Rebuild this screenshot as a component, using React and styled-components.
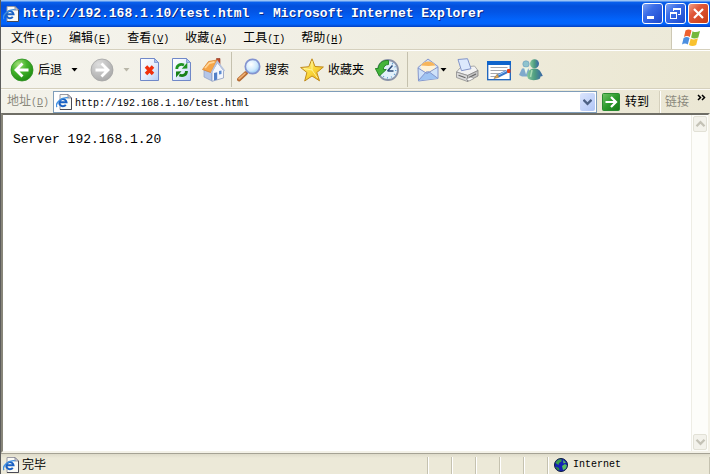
import React from 'react'
import styled, { createGlobalStyle, css } from 'styled-components'

const mono = "'Liberation Mono', 'Noto Sans CJK SC', monospace"
const sans = "'Liberation Sans', 'Noto Sans CJK SC', sans-serif"

const GlobalStyle = createGlobalStyle`
  * {
    box-sizing: border-box;
  }
  body {
    margin: 0;
    background: #ece9d8;
  }
  button, input {
    margin: 0;
    padding: 0;
    border: 0;
    background: none;
    font: inherit;
    color: inherit;
  }
  svg {
    display: block;
    flex: none;
  }
`

const Window = styled.div`
  display: flex;
  flex-direction: column;
  min-height: 100vh;
  border-left: 1px solid #5c5c5c;
  background: #ece9d8;
  color: #000;
  font-family: ${sans};
  font-size: 12px;
  line-height: 16px;
`

const TitleBar = styled.header`
  display: flex;
  align-items: center;
  height: 27px;
  padding: 0 1px 0 2px;
  gap: 4px;
  background: linear-gradient(
    #9cc4f4 0, #9cc4f4 1px, #0a62ee 2px, #0350dc 6px,
    #0355e6 12px, #0264fc 20px, #0264fc 24px, #0440c0 27px
  );
`

const Title = styled.h1`
  display: flex;
  flex: 1;
  gap: 8px;
  margin: 0;
  overflow: hidden;
  white-space: nowrap;
  color: #fff;
  font-family: ${mono};
  font-size: 13px;
  font-weight: bold;
  text-shadow: 1px 1px 0 #0a2a86;
`

const WindowButtons = styled.div`
  display: flex;
  gap: 2px;
`

const WindowButton = styled.button`
  display: flex;
  align-items: center;
  justify-content: center;
  width: 21px;
  height: 21px;
  border: 1px solid #fff;
  border-radius: 3px;
  background: ${props => props.$close
    ? 'linear-gradient(135deg, #f0a088 0, #e0583a 35%, #c83c14 100%)'
    : 'linear-gradient(135deg, #7ea2f0 0, #3c6ee8 35%, #1c48cc 100%)'};
`

const MenuBar = styled.nav`
  display: flex;
  align-items: center;
  height: 23px;
  border-bottom: 1px solid #d5d0bd;
  background: linear-gradient(90deg, #f5f4ee, #ece9d8);
`

const MenuList = styled.div`
  display: flex;
  flex: 1;
  gap: 16px;
  padding: 2px 0 0 10px;
`

const MenuItem = styled.button`
  display: flex;
  align-items: baseline;
  white-space: nowrap;
`

const Key = styled.span`
  font-family: ${mono};
  font-size: 10px;
`

const Brand = styled.div`
  display: flex;
  align-items: center;
  justify-content: center;
  align-self: stretch;
  width: 39px;
  border-left: 1px solid #cdc8b4;
  background: #fff;
`

const ToolBar = styled.div`
  display: flex;
  align-items: center;
  height: 39px;
  padding-left: 5px;
  border-top: 1px solid #fff;
  border-bottom: 1px solid #d5d0bd;
  background: linear-gradient(90deg, #f5f4ee, #ebe7d2);
`

const ToolGroup = styled.div`
  display: flex;
  align-items: center;
  gap: ${props => props.$gap || 0}px;
`

const ToolButton = styled.button`
  display: flex;
  align-items: center;
  gap: ${props => (props.$tight ? 0 : 4)}px;
  height: 32px;
  padding: 0 4px;
  white-space: nowrap;
`

const CaretButton = styled.button`
  display: flex;
  align-items: center;
  justify-content: center;
  width: 16px;
  height: 32px;
  margin-right: ${props => props.$space || 0}px;
  color: ${props => (props.disabled ? '#b9b6a8' : '#000')};
`

const Divider = styled.span`
  width: 1px;
  height: 35px;
  margin: 0 ${props => props.$space}px;
  background: #c5c1ae;
`

const AddressBar = styled.form`
  display: flex;
  align-items: center;
  height: 24px;
  border-top: 1px solid #fbfaf6;
  background: linear-gradient(90deg, #f3f2ea, #ebe7d4);
`

const AddressLabel = styled.label`
  display: flex;
  align-items: baseline;
  width: 52px;
  padding-left: 6px;
  color: #8a887c;
`

const AddressField = styled.div`
  display: flex;
  align-items: center;
  flex: 1;
  height: 22px;
  gap: 3px;
  padding: 0 1px 0 2px;
  border: 1px solid #7f9db9;
  background: #fff;
`

const AddressInput = styled.input`
  flex: 1;
  min-width: 0;
  height: 18px;
  padding-top: 3px;
  outline: 0;
  font-family: ${mono};
  font-size: 10px;
`

const DropButton = styled.button`
  display: flex;
  align-items: center;
  justify-content: center;
  width: 15px;
  height: 18px;
  border-radius: 2px;
  background: linear-gradient(135deg, #dbe5fd, #b0c5f6);
`

const GoButton = styled.button`
  display: flex;
  align-items: center;
  gap: 5px;
  padding: 0 11px 0 5px;
  white-space: nowrap;
`

const Links = styled.div`
  display: flex;
  align-items: center;
  gap: 8px;
  height: 22px;
  padding: 0 4px;
  border-left: 1px solid #fff;
  box-shadow: -1px 0 0 #d5d0bd;
  color: #8a887c;
`

const MoreButton = styled.button`
  align-self: flex-start;
  color: #000;
`

const Viewport = styled.div`
  display: flex;
  flex: 1;
  border: 2px solid #f4f2e8;
  border-top-color: #6f6e66;
  border-left: 2px solid #88867a;
  background: #fff;
`

const Page = styled.main`
  flex: 1;
  padding: 15px 10px;
  font-family: ${mono};
  font-size: 13px;
  line-height: 20px;
`

const ScrollBar = styled.div`
  display: flex;
  flex-direction: column;
  justify-content: space-between;
  width: 17px;
  padding: 1px;
  border-left: 1px solid #eeede5;
  background: #fdfdfa;
`

const ScrollButton = styled.button`
  display: flex;
  align-items: center;
  justify-content: center;
  height: 16px;
  border: 1px solid #e2e1d6;
  border-radius: 2px;
  background: #f3f2eb;
  color: #c4c2b6;
`

const statusCell = css`
  display: flex;
  align-items: center;
  height: 17px;
  border-right: 1px solid #c5c2b0;
  box-shadow: 1px 0 0 #fff;
`

const StatusBar = styled.footer`
  display: flex;
  align-items: center;
  height: 21px;
  padding-top: 2px;
  border-top: 1px solid #a5a294;
  background: linear-gradient(#dedbca, #ece9d8 4px);
`

const StatusText = styled.div`
  ${statusCell}
  flex: 1;
  gap: 3px;
  padding-left: 2px;
`

const StatusCell = styled.div`
  ${statusCell}
  width: 24px;
`

const Zone = styled.div`
  ${statusCell}
  width: 162px;
  padding-left: 6px;
  gap: 5px;
  font-family: ${mono};
  font-size: 10px;
`

const PageIcon = ({ size = 16 }) => (
  <svg width={size} height={size} viewBox="0 0 16 16">
    <path d="M4 .5h8l3.500 3.500v11.500H4z" fill="#fbfbf6" stroke="#9a9aa4" />
    <path d="M12 .5v3.500h3.500z" fill="#d8dbe6" stroke="#6b6b78" strokeWidth=".7" />
    <path d="M15.500 4v11.500H4" fill="none" stroke="#4a4a55" />
    <path d="M3.500 8.200H10.500A3.600 3.600 0 1 0 9.800 10.900" fill="none" stroke="#1b62c4" strokeWidth="2" />
    <path d="M1 13C-1.500 9.500 5.500 2.800 12 3.800" fill="none" stroke="#3f8fe0" strokeWidth="1.300" />
  </svg>
)

const WindowsFlag = () => (
  <svg width="20" height="18" viewBox="0 0 20 18">
    <path d="M4.500 1.500C6.500.2 8.700.2 10.500 1.500L8.800 8C7 6.800 5 6.800 3 8z" fill="#ee6130" />
    <path d="M11.500 2.200c2 1.200 4.500 1.200 7.500-.2L17.300 8.500c-2.700 1.400-5 1.400-7.200 0z" fill="#74b83c" />
    <path d="M2.600 9C4.600 7.800 6.700 7.800 8.500 9L6.800 15.500C5 14.200 3 14.200 1 15.500z" fill="#4c8fe0" />
    <path d="M9.700 9.500c2 1.200 4.300 1.200 7.200-.2L15.200 16c-2.700 1.400-5 1.400-7.200 0z" fill="#f9c22e" />
  </svg>
)

const Caret = () => (
  <svg width="7" height="4" viewBox="0 0 7 4">
    <path d="M.5 0h6L3.500 3.500z" fill="currentColor" />
  </svg>
)

const Chevron = ({ up, width = 9, color = 'currentColor' }) => (
  <svg width={width} height="8" viewBox="0 0 9 8">
    <path d={up ? 'M.5 6.200l4-4 4 4' : 'M.5 1.800l4 4 4-4'} fill="none" stroke={color} strokeWidth="2.300" />
  </svg>
)

const BackIcon = () => (
  <svg width="24" height="24" viewBox="0 0 24 24">
    <defs>
      <radialGradient id="back" cx=".35" cy=".25" r=".8">
        <stop offset="0" stopColor="#a6e07c" />
        <stop offset=".45" stopColor="#45b52c" />
        <stop offset="1" stopColor="#1d8a12" />
      </radialGradient>
    </defs>
    <circle cx="12" cy="12" r="11" fill="url(#back)" stroke="#2f8f22" strokeWidth=".8" />
    <path d="M12.500 5.500L6 12l6.500 6.500M6.500 12h12" fill="none" stroke="#fff" strokeWidth="2.800" />
  </svg>
)

const ForwardIcon = () => (
  <svg width="24" height="24" viewBox="0 0 24 24">
    <defs>
      <radialGradient id="forward" cx=".35" cy=".25" r=".8">
        <stop offset="0" stopColor="#dedede" />
        <stop offset=".6" stopColor="#bdbdbd" />
        <stop offset="1" stopColor="#a8a8a8" />
      </radialGradient>
    </defs>
    <circle cx="12" cy="12" r="11" fill="url(#forward)" stroke="#a5a5a5" strokeWidth=".8" />
    <path d="M11.500 5.500L18 12l-6.500 6.500M17.500 12h-12" fill="none" stroke="#fff" strokeWidth="2.800" />
  </svg>
)

const Sheet = ({ children }) => (
  <svg width="24" height="24" viewBox="0 0 24 24">
    <defs>
      <linearGradient id="sheet" x1="0" y1="0" x2="1" y2="1">
        <stop offset="0" stopColor="#fff" />
        <stop offset=".5" stopColor="#e8f0fd" />
        <stop offset="1" stopColor="#b4cdf5" />
      </linearGradient>
    </defs>
    <path d="M2.500 .5h14l4 4v18H2.500z" fill="url(#sheet)" stroke="#7088c8" />
    <path d="M16.500 .5v4h4z" fill="#a9bfec" stroke="#7088c8" strokeWidth=".7" />
    {children}
  </svg>
)

const StopIcon = () => (
  <Sheet>
    <path d="M8 8.500l7 7.500M15 8.500l-7 7.500" stroke="#f0300c" strokeWidth="3.400" />
  </Sheet>
)

const RefreshIcon = () => (
  <Sheet>
    <path d="M6.800 11c0-4 3.500-5.500 7.200-4" fill="none" stroke="#1f9422" strokeWidth="2.800" />
    <path d="M11.800 10.800l5.500-.2V4.500z" fill="#1f9422" />
    <path d="M16.500 13c0 4-3.500 5.500-7.200 4" fill="none" stroke="#178018" strokeWidth="2.800" />
    <path d="M11.500 13.200l-5.500.2v6.100z" fill="#178018" />
  </Sheet>
)

const HomeIcon = () => (
  <svg width="24" height="24" viewBox="0 0 24 24">
    <path d="M14.500 .5h3.500v7l-3.500-3z" fill="#c04a28" stroke="#8c3420" strokeWidth=".6" />
    <path d="M2 12l8 3v8l-8-4z" fill="#b4c6e8" stroke="#8a9cc4" strokeWidth=".7" />
    <path d="M10 13.500l5.500-9 6 8v7.500L10 23.300z" fill="#f4f7fd" stroke="#8d9cc0" strokeWidth=".8" />
    <path d="M.5 11.500L6.500 3.500 15 2l-6 12.500z" fill="#f6a548" stroke="#d98432" strokeWidth=".8" />
    <path d="M3 10L7.500 5l5-1.200" fill="none" stroke="#ffd596" strokeWidth="1.800" />
    <path d="M9.300 15L15.300 3.500 22.500 13" fill="none" stroke="#b6c3de" strokeWidth="1.600" />
    <path d="M12 15l3.200-.7v7.300l-3.200.8z" fill="#5380c8" />
    <path d="M17 13l2.500-.5v3.500l-2.500.5z" fill="#5c8cd2" />
  </svg>
)

const SearchIcon = () => (
  <svg width="24" height="24" viewBox="0 0 24 24">
    <defs>
      <radialGradient id="lens" cx=".4" cy=".35" r=".7">
        <stop offset="0" stopColor="#fff" />
        <stop offset=".6" stopColor="#cfe9fc" />
        <stop offset="1" stopColor="#86bff0" />
      </radialGradient>
    </defs>
    <path d="M2 21.500L9 15" stroke="#b56c34" strokeWidth="4" strokeLinecap="round" />
    <path d="M2 20.800l6-5.500" stroke="#f2b070" strokeWidth="1.600" strokeLinecap="round" />
    <circle cx="15.500" cy="8.500" r="7.200" fill="url(#lens)" stroke="#8393cf" strokeWidth="1.700" />
  </svg>
)

const StarIcon = () => (
  <svg width="24" height="24" viewBox="0 0 24 24">
    <defs>
      <linearGradient id="star" x1="0" y1="0" x2="1" y2="1">
        <stop offset="0" stopColor="#fffab0" />
        <stop offset=".5" stopColor="#fbd93c" />
        <stop offset="1" stopColor="#e9a818" />
      </linearGradient>
    </defs>
    <path d="M12 .8l3 7.700 8.400.5-6.600 5.500 2.700 8.300-7.500-4.800-7.300 5 2.200-8.500L.6 9.500l8.200-.8z" fill="url(#star)" stroke="#c08a1c" strokeLinejoin="round" />
    <path d="M12 3v9l-8-1.500M12 12l5.500 8" fill="none" stroke="#fff6a0" strokeWidth=".9" />
  </svg>
)

const HistoryIcon = () => (
  <svg width="24" height="24" viewBox="0 0 24 24">
    <circle cx="13" cy="12" r="10" fill="#e2f0fa" stroke="#8a93a8" strokeWidth="1.800" />
    <circle cx="13" cy="12" r="7.800" fill="none" stroke="#5b9bd0" strokeWidth="1.300" strokeDasharray="1 3.080" />
    <path d="M12.500 13l5-5.500M12.500 13h6" stroke="#2c4a78" strokeWidth="1.500" />
    <path d="M13.500 2.500C6.500 2 3.500 6 3.200 10.500H.3l4 7.500 7-6.500H8.300c.2-3 2-5 5.200-5z" fill="#44b43a" stroke="#1f8020" strokeWidth=".9" />
  </svg>
)

const MailIcon = () => (
  <svg width="24" height="24" viewBox="0 0 24 24">
    <path d="M2 9.500L12 1l10 7.500v12L2.500 23z" fill="#cfe2fa" stroke="#8496cc" />
    <path d="M4.500 8.500c2-5.500 12-7 15 0l-.5 3-7 4-7-3.500z" fill="#fff3d8" />
    <path d="M5 7.500C8 2.500 16 2 19.500 7.500l-7 .5z" fill="#f6b55c" />
    <path d="M2.500 22.500l7.500-8.500 3-.2 9 6.700" fill="#9fc4f3" stroke="#8496cc" />
    <path d="M2 10l9 5.500L22 9" fill="none" stroke="#8496cc" />
  </svg>
)

const PrintIcon = () => (
  <svg width="24" height="24" viewBox="0 0 24 24">
    <path d="M1.500 14l4-4.500 14-1.500 3.500 4.500-10 5z" fill="#f2f2f2" stroke="#979797" strokeWidth=".8" />
    <path d="M3 1.500L12.500.7l3.500 10-9.500 2z" fill="#dce9fd" stroke="#8294c8" />
    <path d="M1.500 14l11 3.500v6l-11-4z" fill="#dadada" stroke="#8d8d8d" strokeWidth=".8" />
    <path d="M12.500 17.500l10.500-5v5.500l-10.500 5.500z" fill="#c4c4c4" stroke="#808080" strokeWidth=".8" />
    <path d="M3.500 17.200l7 2.500M14 19.500l7-3.500" stroke="#666" strokeWidth="1.200" />
    <path d="M11 21l5-2 3 1.500-5 2.500z" fill="#fafafa" stroke="#888" strokeWidth=".6" />
  </svg>
)

const EditIcon = () => (
  <svg width="24" height="24" viewBox="0 0 24 24">
    <rect x=".7" y="3.700" width="22.600" height="18" fill="#fff" stroke="#1b62bd" strokeWidth="1.300" />
    <rect x="0" y="3" width="24" height="4" fill="#0f64cc" />
    <path d="M3.500 9.500h17M3.500 12.500h15M3.500 15.500h11M3.500 18.500h5" stroke="#a4a8b0" />
    <path d="M11 18l9-4.500" stroke="#3a76c8" strokeWidth="3.600" />
    <path d="M11 17.200l8.500-4.300" stroke="#a9d0f8" />
    <path d="M7 20.500l3.200-4.200 1.500 3z" fill="#e8a94c" stroke="#8b6a38" strokeWidth=".6" />
    <rect x="20" y="11" width="3.500" height="4" rx="1" fill="#e2401c" />
  </svg>
)

const PeopleIcon = () => (
  <svg width="24" height="24" viewBox="0 0 24 24">
    <defs>
      <linearGradient id="person">
        <stop offset="0" stopColor="#85c79c" />
        <stop offset=".5" stopColor="#4d9c80" />
        <stop offset="1" stopColor="#3763a8" />
      </linearGradient>
    </defs>
    <path d="M0 17l3-6.500 6-.5 3 6-3.500 2.500H3z" fill="#7fa9cc" />
    <circle cx="7" cy="6" r="3.200" fill="#8fc3ce" stroke="#6698b8" strokeWidth=".6" />
    <path d="M5 9.500l2 7L9.500 9.500z" fill="#e9f7e4" />
    <path d="M9 20.500L8 17.500C9.500 12 11.500 10.500 16 10.500c4 0 6 3 7.800 7.500l-2.300.5-.5 2c-3 2-9 2.500-12 0z" fill="url(#person)" />
    <circle cx="15.500" cy="5.800" r="4.500" fill="url(#person)" />
    <path d="M13 12l-1.500 7" stroke="#a9dbb4" strokeWidth="1.500" />
  </svg>
)

const GoIcon = () => (
  <svg width="18" height="18" viewBox="0 0 18 18">
    <defs>
      <linearGradient id="go" x1="0" y1="0" x2="1" y2="1">
        <stop offset="0" stopColor="#6fc465" />
        <stop offset=".5" stopColor="#2c9a2c" />
        <stop offset="1" stopColor="#127a14" />
      </linearGradient>
    </defs>
    <rect x=".5" y=".5" width="17" height="17" rx="1" fill="url(#go)" stroke="#2a8a30" />
    <path d="M9 4l5 5-5 5M3.500 9H14" fill="none" stroke="#fff" strokeWidth="2.200" />
  </svg>
)

const GlobeIcon = () => (
  <svg width="14" height="14" viewBox="0 0 14 14">
    <circle cx="7" cy="7" r="6.500" fill="#1522b4" stroke="#0c1c3c" />
    <path d="M1.500 5C2.500 2 5 .8 7.500 1.200L7.500 3.500 5 5 4.500 7z" fill="#3aa04a" />
    <path d="M9 2l3 2.500-2.500 1zM8 8L11 6l2 1.500-1.500 3.500-2.500 1z" fill="#58c060" />
    <path d="M1.500 8.500l3.500 1.500.5 2.500L3 11.500z" fill="#2c8c3c" />
  </svg>
)

const menus = [
  ['文件', 'F'],
  ['编辑', 'E'],
  ['查看', 'V'],
  ['收藏', 'A'],
  ['工具', 'T'],
  ['帮助', 'H'],
]

const App = () => {
  return (
    <>
      <GlobalStyle />
      <Window>
        <TitleBar>
          <PageIcon />
          <Title>
            <span>http://192.168.1.10/test.html</span>
            <span>-</span>
            <span>Microsoft Internet Explorer</span>
          </Title>
          <WindowButtons>
            <WindowButton aria-label="最小化">
              <svg width="17" height="17" viewBox="0 0 17 17">
                <rect x="3" y="11" width="7" height="3" fill="#fff" />
              </svg>
            </WindowButton>
            <WindowButton aria-label="还原">
              <svg width="17" height="17" viewBox="0 0 17 17">
                <path d="M6.500 6V3.500h7v6H11" fill="none" stroke="#fff" />
                <path d="M6 4h8" stroke="#fff" strokeWidth="2" />
                <rect x="3.500" y="7.500" width="6" height="6" fill="none" stroke="#fff" />
                <path d="M3 8h7" stroke="#fff" strokeWidth="2" />
              </svg>
            </WindowButton>
            <WindowButton $close aria-label="关闭">
              <svg width="17" height="17" viewBox="0 0 17 17">
                <path d="M4 4l9 9M13 4l-9 9" stroke="#fff" strokeWidth="2.200" />
              </svg>
            </WindowButton>
          </WindowButtons>
        </TitleBar>

        <MenuBar>
          <MenuList>
            {menus.map(([label, key]) => (
              <MenuItem key={key}>
                {label}
                <Key>(<u>{key}</u>)</Key>
              </MenuItem>
            ))}
          </MenuList>
          <Brand>
            <WindowsFlag />
          </Brand>
        </MenuBar>

        <ToolBar>
          <ToolGroup>
            <ToolButton><BackIcon />后退</ToolButton>
            <CaretButton $space={4} aria-label="后退记录"><Caret /></CaretButton>
            <ToolButton disabled aria-label="前进"><ForwardIcon /></ToolButton>
            <CaretButton disabled aria-label="前进记录"><Caret /></CaretButton>
            <ToolButton aria-label="停止"><StopIcon /></ToolButton>
            <ToolButton aria-label="刷新"><RefreshIcon /></ToolButton>
            <ToolButton aria-label="主页"><HomeIcon /></ToolButton>
          </ToolGroup>
          <Divider $space={1} />
          <ToolGroup $gap={3}>
            <ToolButton><SearchIcon />搜索</ToolButton>
            <ToolButton><StarIcon />收藏夹</ToolButton>
            <ToolButton aria-label="历史"><HistoryIcon /></ToolButton>
          </ToolGroup>
          <Divider $space={4} />
          <ToolGroup>
            <ToolButton $tight aria-label="邮件"><MailIcon /><Caret /></ToolButton>
            <ToolButton aria-label="打印"><PrintIcon /></ToolButton>
            <ToolButton aria-label="编辑"><EditIcon /></ToolButton>
            <ToolButton aria-label="Messenger"><PeopleIcon /></ToolButton>
          </ToolGroup>
        </ToolBar>

        <AddressBar onSubmit={e => e.preventDefault()}>
          <AddressLabel htmlFor="address">
            地址<Key>(<u>D</u>)</Key>
          </AddressLabel>
          <AddressField>
            <PageIcon />
            <AddressInput id="address" defaultValue="http://192.168.1.10/test.html" />
            <DropButton type="button" aria-label="地址列表">
              <Chevron color="#4d6185" />
            </DropButton>
          </AddressField>
          <GoButton><GoIcon />转到</GoButton>
          <Links>
            链接
            <MoreButton type="button" aria-label="更多链接">
              <svg width="9" height="16" viewBox="0 0 9 16">
                <path d="M1 4l2.500 2.500L1 9M5 4l2.500 2.500L5 9" fill="none" stroke="currentColor" strokeWidth="1.500" />
              </svg>
            </MoreButton>
          </Links>
        </AddressBar>

        <Viewport>
          <Page>Server 192.168.1.20</Page>
          <ScrollBar>
            <ScrollButton disabled aria-label="向上滚动"><Chevron up width={11} /></ScrollButton>
            <ScrollButton disabled aria-label="向下滚动"><Chevron width={11} /></ScrollButton>
          </ScrollBar>
        </Viewport>

        <StatusBar>
          <StatusText><PageIcon />完毕</StatusText>
          <StatusCell />
          <StatusCell />
          <StatusCell />
          <StatusCell />
          <StatusCell />
          <Zone><GlobeIcon />Internet</Zone>
        </StatusBar>
      </Window>
    </>
  )
}

export default App
